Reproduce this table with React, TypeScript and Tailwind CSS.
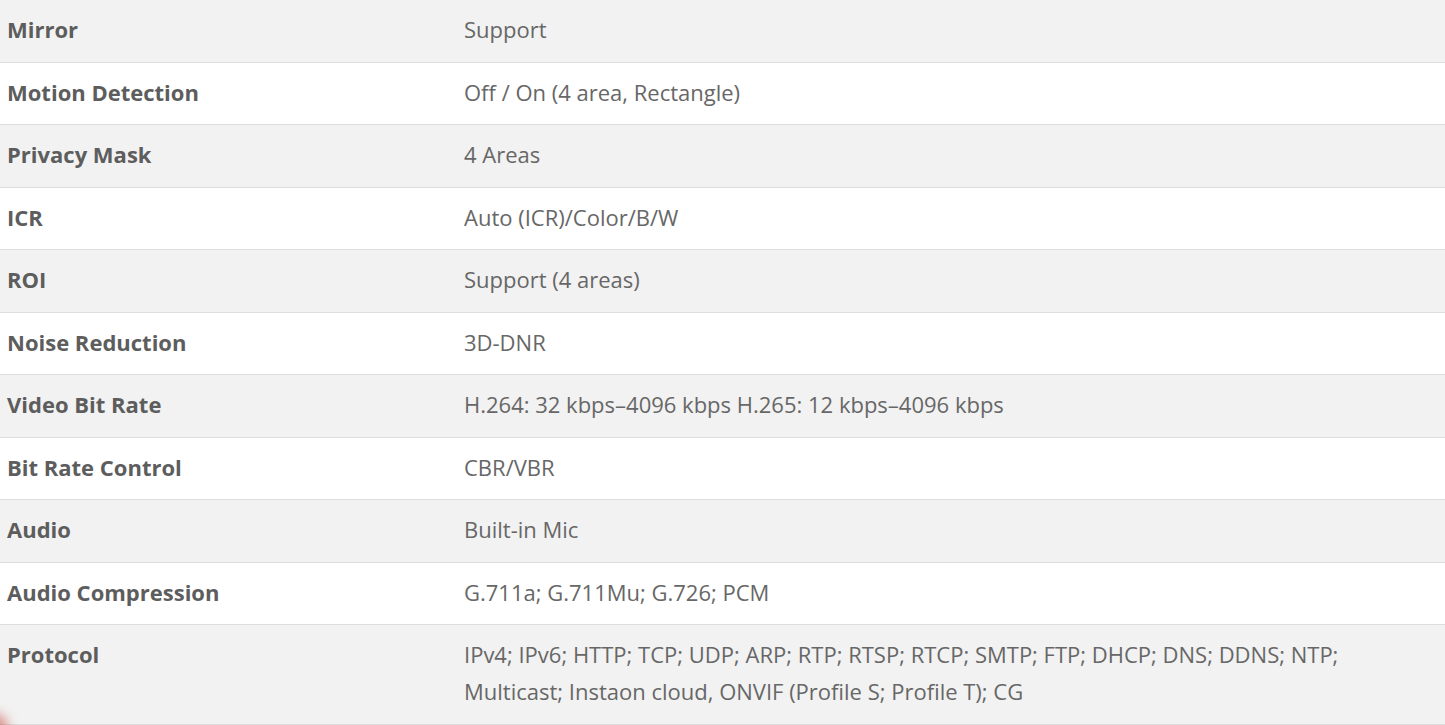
import React from "react";

const rows: [string, React.ReactNode][] = [
  ["Mirror", "Support"],
  ["Motion Detection", "Off / On (4 area, Rectangle)"],
  ["Privacy Mask", "4 Areas"],
  ["ICR", "Auto (ICR)/Color/B/W"],
  ["ROI", "Support (4 areas)"],
  ["Noise Reduction", "3D-DNR"],
  ["Video Bit Rate", "H.264: 32 kbps–4096 kbps H.265: 12 kbps–4096 kbps"],
  ["Bit Rate Control", "CBR/VBR"],
  ["Audio", "Built-in Mic"],
  ["Audio Compression", "G.711a; G.711Mu; G.726; PCM"],
  [
    "Protocol",
    <>
      IPv4; IPv6; HTTP; TCP; UDP; ARP; RTP; RTSP; RTCP; SMTP; FTP; DHCP; DNS; DDNS; NTP;
      <br />
      Multicast; Instaon cloud, ONVIF (Profile S; Profile T); CG
    </>,
  ],
];

export default function App() {
  return (
    <div
      className="relative w-[1445px] h-[725px] overflow-hidden bg-white"
      style={{ fontFamily: '"Open Sans", "Noto Sans", sans-serif' }}
    >
      <div className="flex flex-col">
        {rows.map(([label, value], i) => (
          <div
            key={i}
            className={`grid grid-cols-[457px_1fr] border-b border-[#dddddd] text-[22px] leading-[37px] ${
              i % 2 === 0 ? "bg-[#f2f2f2]" : "bg-white"
            }`}
          >
            <div className="pl-[7px] pt-[11.25px] pb-[13.25px] font-bold text-[#5d5d5d]">{label}</div>
            <div className="pl-[7px] pr-[4px] pt-[11.25px] pb-[13.25px] text-[#676767]">{value}</div>
          </div>
        ))}
      </div>
      <div className="absolute -left-[22px] bottom-[-22px] w-[30px] h-[34px] rounded-full bg-[#c0392b] opacity-50 blur-[6px]" />
    </div>
  );
}
